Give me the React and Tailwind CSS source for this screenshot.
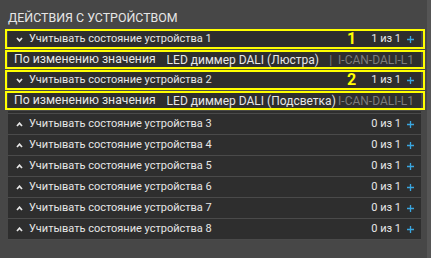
import { useState } from "react";

const Chevron = ({ open }) => (
  <svg width="7" height="5" viewBox="0 0 7 5" className="shrink-0">
    {open ? (
      <path d="M1 1 L3.5 3.8 L6 1" fill="none" stroke="#e8e8e8" strokeWidth="1.7" />
    ) : (
      <path d="M1 4 L3.5 1.2 L6 4" fill="none" stroke="#e8e8e8" strokeWidth="1.7" />
    )}
  </svg>
);

const Plus = () => (
  <svg width="7" height="9" viewBox="0 0 7 9" className="shrink-0">
    <path d="M3.5 1 V8 M0 4.5 H7" stroke="#3aa6e0" strokeWidth="1.3" />
  </svg>
);

const Mark = () => (
  <div className="absolute top-0 bottom-0 -left-[3px] -right-[4px] border-2 border-[#ffff00] pointer-events-none" />
);

const DeviceRow = ({ n, count, open, mark, label }) => (
  <div className="relative h-[21px] flex items-center border-b border-[#4a4a4a] pl-[8px] pr-[7px]">
    <Chevron open={open} />
    <span className="ml-[6px] text-[11px] text-[#e6e6e6]">
      Учитывать состояние устройства {n}
    </span>
    <span className="ml-auto flex items-center">
      {label && (
        <span className="mr-[15px] text-[16px] font-bold text-[#ffff00] leading-none">
          {label}
        </span>
      )}
      <span className="text-[11px] text-[#e8e8e8]">{count} из 1</span>
      <span className="ml-[6px]">
        <Plus />
      </span>
    </span>
    {mark && <Mark />}
  </div>
);

const DetailRow = ({ device, sep }) => (
  <div className="relative h-[20px] border-b border-[#4a4a4a]">
    <div className="h-full flex items-center pl-[6px] pr-[7px] whitespace-nowrap overflow-hidden">
      <span className="shrink-0 text-[12.2px] text-[#e6e6e6]">По изменению значения</span>
      <span className="ml-[11px] min-w-0 flex-1 overflow-hidden text-[12px] text-[#e6e6e6]">
        {device}
      </span>
      <span className="shrink-0 text-[12px] text-[#7c7c7c]">
        {sep && <span className="mr-[6px]">|</span>}
        I-CAN-DALI-L1
      </span>
    </div>
    <Mark />
  </div>
);

export default function App() {
  const [rows] = useState([3, 4, 5, 6, 7, 8]);

  return (
    <div
      className="w-[431px] h-[258px] bg-[#474747] flex overflow-hidden"
      style={{ fontFamily: "Roboto, 'Noto Sans', sans-serif" }}
    >
      <div className="flex-1 pl-[8px] pt-[10px]">
        <div className="text-[12.4px] leading-[15px] text-[#e6e6e6] uppercase">
          Действия с устройством
        </div>
        <div className="mt-[4px] w-[413px] bg-[#2e2e2e]">
          <DeviceRow n={1} count={1} open mark label="1" />
          <DetailRow device="LED диммер DALI (Люстра)" sep />
          <DeviceRow n={2} count={1} open mark label="2" />
          <DetailRow device="LED диммер DALI (Подсветка)" />
          <div className="h-[3px] border-b border-[#4a4a4a]" />
          {rows.map((n) => (
            <DeviceRow key={n} n={n} count={0} />
          ))}
        </div>
      </div>
      <div className="w-[4px] bg-[#555555]" />
    </div>
  );
}
